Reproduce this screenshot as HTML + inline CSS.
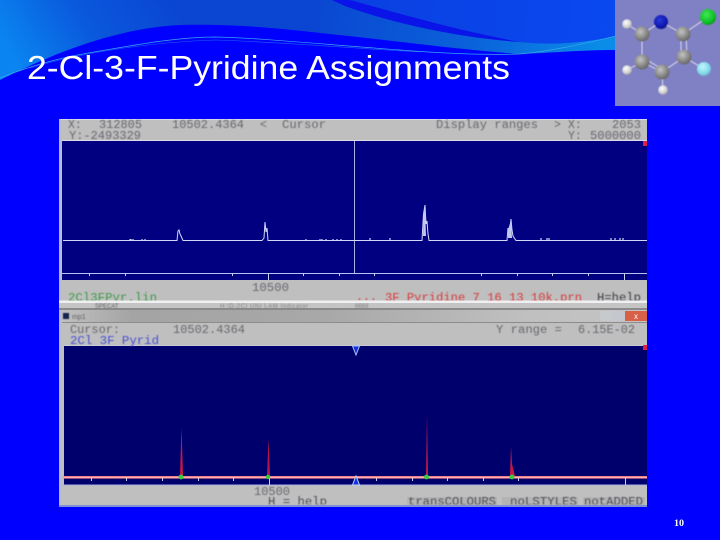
<!DOCTYPE html>
<html><head><meta charset="utf-8"><title>2-Cl-3-F-Pyridine Assignments</title>
<style>
html,body{margin:0;padding:0;background:#0000ff;width:720px;height:540px;overflow:hidden}
svg{display:block}
.m{font-family:"Liberation Mono",monospace;font-size:11.5px}
</style></head><body>
<svg width="720" height="540" viewBox="0 0 720 540" xmlns="http://www.w3.org/2000/svg">
<defs>
<linearGradient id="top" gradientUnits="userSpaceOnUse" x1="170" y1="0" x2="30" y2="85"><stop offset="0" stop-color="#0a46d2"/><stop offset="0.5" stop-color="#0a58dc"/><stop offset="1" stop-color="#0a84f0"/></linearGradient>
<linearGradient id="top2" gradientUnits="userSpaceOnUse" x1="340" y1="0" x2="616" y2="40"><stop offset="0" stop-color="#0a40e0"/><stop offset="1" stop-color="#0a48f0"/></linearGradient>
<linearGradient id="band" gradientUnits="userSpaceOnUse" x1="320" y1="5" x2="600" y2="50"><stop offset="0" stop-color="#0a48d2"/><stop offset="0.55" stop-color="#0a62da"/><stop offset="1" stop-color="#0a8ce8"/></linearGradient>
<linearGradient id="chrome" x1="0" y1="0" x2="1" y2="0"><stop offset="0" stop-color="#c0c0c0"/><stop offset="0.12" stop-color="#a4a4a4"/><stop offset="0.45" stop-color="#a8a8a8"/><stop offset="0.8" stop-color="#c0c0c0"/><stop offset="1" stop-color="#c4c4c4"/></linearGradient>
<radialGradient id="gC" cx=".4" cy=".35" r=".7"><stop offset="0" stop-color="#c4c4c4"/><stop offset=".6" stop-color="#888"/><stop offset="1" stop-color="#606060"/></radialGradient>
<radialGradient id="gH" cx=".4" cy=".35" r=".7"><stop offset="0" stop-color="#fff"/><stop offset=".7" stop-color="#ccc"/><stop offset="1" stop-color="#999"/></radialGradient>
<radialGradient id="gN" cx=".4" cy=".35" r=".7"><stop offset="0" stop-color="#2a38d8"/><stop offset=".7" stop-color="#1018b0"/><stop offset="1" stop-color="#0a1080"/></radialGradient>
<radialGradient id="gCl" cx=".4" cy=".35" r=".7"><stop offset="0" stop-color="#40e850"/><stop offset=".7" stop-color="#10c028"/><stop offset="1" stop-color="#0a9018"/></radialGradient>
<radialGradient id="gF" cx=".4" cy=".35" r=".7"><stop offset="0" stop-color="#c0f8ff"/><stop offset=".7" stop-color="#80d8e8"/><stop offset="1" stop-color="#68a8d0"/></radialGradient>
<clipPath id="c1"><rect x="59" y="280" width="588" height="20.5"/></clipPath>
<clipPath id="c2"><rect x="59" y="485" width="588" height="19.5"/></clipPath>
<filter id="b" x="-5%" y="-20%" width="110%" height="140%"><feGaussianBlur stdDeviation="0.42"/></filter>
<filter id="b2" x="-20%" y="-5%" width="140%" height="110%"><feGaussianBlur stdDeviation="0.3"/></filter>
<filter id="b3" x="-5%" y="-5%" width="110%" height="110%"><feGaussianBlur stdDeviation="0.5"/></filter>
</defs>

<rect width="720" height="540" fill="#0000ff"/>
<!-- header waves -->
<path d="M0 0H321V33C260 26 220 24 180 25C120 28 60 50 0 80Z" fill="url(#top)"/>
<path d="M320 0H616V36C580 44 550 46 520 43C470 34 400 15 345 0Z" fill="url(#top2)"/>
<path d="M320 0H345C400 15 470 34 520 42C555 46 590 42 616 36V50C580 50 550 53 520 54C460 50 390 40 320 33Z" fill="url(#band)"/>
<path d="M332 0H350C400 14 460 31 520 42C460 38 395 24 345 6Z" fill="#0a14e8"/>
<path d="M0 78C40 62 70 56 100 51C140 44 180 37 215 37C260 38 320 44 400 50C450 54 490 55 520 54C560 50 590 42 616 36" fill="none" stroke="#38a8ec" stroke-width="0.7"/>
<path d="M30 68C80 53 150 42 215 40C280 42 350 48 420 52" fill="none" stroke="#2060f0" stroke-width="0.6"/>

<!-- title -->
<text x="27" y="79" fill="#fff" font-family="Liberation Sans,sans-serif" font-size="33.500" textLength="483" lengthAdjust="spacingAndGlyphs">2-Cl-3-F-Pyridine Assignments</text>

<!-- molecule -->
<rect x="615" y="0" width="105" height="106" fill="#8080c4"/>
<g filter="url(#b3)">
<g stroke="#e4e4f0" stroke-width="0.9" fill="none">
<path d="M627 24L642 34M642 34L661 22M661 22L683 34M683 34L708 17M681 37L681 55M686 37L687 54M684 57L704 69M684 57L662 72M662 72L642 62M660 68L644 58M642 62L642 34M642 62L627 70M662 72L663 90"/>
</g>
<circle cx="627" cy="24" r="4.800" fill="url(#gH)"/><circle cx="627" cy="70" r="4.800" fill="url(#gH)"/><circle cx="663" cy="90" r="4.800" fill="url(#gH)"/>
<circle cx="642" cy="34" r="7.500" fill="url(#gC)"/><circle cx="683" cy="34" r="7.500" fill="url(#gC)"/><circle cx="642" cy="62" r="7.500" fill="url(#gC)"/><circle cx="684" cy="57" r="7.500" fill="url(#gC)"/><circle cx="662" cy="72" r="7.500" fill="url(#gC)"/>
<circle cx="661" cy="22" r="7" fill="url(#gN)"/><circle cx="708" cy="17" r="8" fill="url(#gCl)"/><circle cx="704" cy="69" r="7" fill="url(#gF)"/>
</g>

<!-- screenshot panel -->
<rect x="59" y="119" width="588" height="388" fill="#bfbfbf"/>
<rect x="59" y="119" width="588" height="1" fill="#d8d8e8"/>
<rect x="59" y="119" width="1.500" height="388" fill="#a8b4e0"/>
<rect x="59" y="505" width="588" height="2" fill="#8090d8"/>

<!-- upper plot -->
<rect x="62" y="140" width="585" height="1" fill="#dcdce8"/>
<rect x="62" y="141" width="585" height="139" fill="#000080"/>
<rect x="62" y="273" width="585" height="1" fill="#b8c0f0"/>
<rect x="354" y="141" width="1" height="132" fill="#a8b0e0"/>
<g fill="#c8d0f0"><rect x="89" y="273" width="1" height="3"/><rect x="125" y="273" width="1" height="3"/><rect x="232" y="273" width="1" height="3"/><rect x="268" y="273" width="1" height="7"/><rect x="303" y="273" width="1" height="3"/><rect x="339" y="273" width="1" height="3"/><rect x="374" y="273" width="1" height="3"/><rect x="481" y="273" width="1" height="3"/><rect x="517" y="273" width="1" height="3"/><rect x="552" y="273" width="1" height="3"/><rect x="588" y="273" width="1" height="3"/><rect x="624" y="273" width="1" height="7"/></g>
<g filter="url(#b2)">
<path d="M63 240.500H177L178 231L179 230L180 234L181 236L183 240.500H262L264 238L265 222L266 232L267 228L268 240.500H422L423.500 214L425 205L426 224L427 221L428 234L429 240.500H507L508 228L509.500 232L511 219L512 230L513 236L516 240.500H647" fill="none" stroke="#d4d8f8" stroke-width="1"/>
<path d="M423.500 214L425 206L426 236H423Z" fill="#c0c8f0"/><path d="M508 230L511 220L512 238H508Z" fill="#c0c8f0"/>
<path d="M130 240V239M131 240V239M133 240V239M142 240V239M145 240V239M306 240V239M320 240V239M322 240V239M326 240V239M333 240V239M337 240V239M341 240V239M370 240V238M390 240V238M541 240V238M547 240V238M549 240V238M611 240V238M615 240V238M620 240V238M623 240V238" stroke="#d0d8f8" stroke-width="1.200"/>
</g>
<rect x="643" y="141" width="4" height="5" fill="#e02040"/>

<!-- upper text -->
<g class="m" fill="#68686f" filter="url(#b)">
<text x="68" y="128">X:</text><text x="99" y="128" textLength="43" lengthAdjust="spacingAndGlyphs">312805</text>
<text x="172" y="128" textLength="72" lengthAdjust="spacingAndGlyphs">10502.4364</text><text x="260" y="128">&lt;</text><text x="282" y="128" textLength="44" lengthAdjust="spacingAndGlyphs">Cursor</text>
<text x="436" y="128" textLength="102" lengthAdjust="spacingAndGlyphs">Display ranges</text><text x="554" y="128">&gt;</text><text x="568" y="128">X:</text><text x="612" y="128" textLength="29" lengthAdjust="spacingAndGlyphs">2053</text>
<text x="69" y="139" textLength="72" lengthAdjust="spacingAndGlyphs">Y:-2493329</text><text x="568" y="139">Y:</text><text x="590" y="139" textLength="51" lengthAdjust="spacingAndGlyphs">5000000</text>
<text x="252" y="291" textLength="37" lengthAdjust="spacingAndGlyphs">10500</text>
</g>
<g class="m" clip-path="url(#c1)" filter="url(#b)">
<text x="68" y="301" textLength="89" lengthAdjust="spacingAndGlyphs" fill="#3f9a4a">2Cl3FPyr.lin</text>
<text x="356" y="300" textLength="21" lengthAdjust="spacingAndGlyphs" fill="#d83a3a">...</text>
<text x="385" y="301" textLength="197" lengthAdjust="spacingAndGlyphs" fill="#d83a3a">3F Pyridine 7 16 13 10k.prn</text>
<text x="597" y="301" textLength="44" lengthAdjust="spacingAndGlyphs" fill="#404048">H=help</text>
</g>

<!-- divider / second window chrome -->
<rect x="59" y="300.500" width="588" height="3" fill="#f0f0f2"/>
<rect x="59" y="303" width="588" height="5" fill="#c4c4c4"/>
<rect x="59" y="308" width="588" height="2" fill="#8a8a8a"/>
<rect x="62" y="310" width="585" height="12" fill="url(#chrome)"/>
<rect x="62" y="322" width="585" height="1" fill="#8c8c8c"/>
<g filter="url(#b)">
<rect x="63" y="313" width="6" height="6" fill="#182050"/>
<text x="72" y="319" font-family="Liberation Sans,sans-serif" font-size="7" fill="#606060">mp1</text>
<text x="95" y="308" font-family="Liberation Sans,sans-serif" font-size="6" fill="#606060">SPECAT</text>
<text x="220" y="308" font-family="Liberation Sans,sans-serif" font-size="6" fill="#808080" textLength="88">H:\D-2CI UNI LAM Indicator</text>
<text x="355" y="308" font-family="Liberation Sans,sans-serif" font-size="6" fill="#808080">6668</text>
</g>
<rect x="600" y="311" width="12" height="10" fill="#c8ccd0" opacity=".8"/><rect x="612" y="311" width="13" height="10" fill="#c4c8d0" opacity=".8"/><rect x="625" y="311" width="22" height="10" fill="#d86048"/>
<text x="636" y="319" font-family="Liberation Sans,sans-serif" font-size="8" fill="#fff" text-anchor="middle">x</text>

<!-- lower plot -->
<rect x="64" y="345" width="583" height="140" fill="#00006c"/>
<rect x="64" y="345" width="583" height="1" fill="#c8c8d8"/>
<rect x="63" y="476" width="584" height="2.600" fill="#f08088"/>
<rect x="63" y="477" width="584" height="1" fill="#ffb0b8"/>
<rect x="62" y="484.500" width="585" height="1" fill="#a8b0e0"/>
<g fill="#c8d0f0"><rect x="91" y="478" width="1" height="3"/><rect x="126" y="478" width="1" height="3"/><rect x="162" y="478" width="1" height="3"/><rect x="198" y="478" width="1" height="3"/><rect x="233" y="478" width="1" height="3"/><rect x="269" y="478" width="1" height="7"/><rect x="376" y="478" width="1" height="3"/><rect x="412" y="478" width="1" height="3"/><rect x="447" y="478" width="1" height="3"/><rect x="483" y="478" width="1" height="3"/><rect x="518" y="478" width="1" height="3"/><rect x="625" y="478" width="1" height="7"/></g>
<g filter="url(#b2)">
<path d="M181.500 427L183 476H180Z" fill="#c81848"/><path d="M268.500 438L270 476H267Z" fill="#b81848"/>
<path d="M427 414L428 476H426Z" fill="#c81848"/><path d="M511 446L512 464L515 476H510Z" fill="#c81848"/>
</g>
<g fill="#30d040"><circle cx="181" cy="477" r="2.400"/><circle cx="268" cy="477" r="2.200"/><circle cx="426.500" cy="477" r="2.400"/><circle cx="512" cy="477" r="2.400"/></g>
<path d="M352.500 346H359.500L356 355Z" fill="#1030e0" stroke="#a8c0f0" stroke-width="1"/>
<path d="M352.500 485H359.500L356 476Z" fill="#1030e0" stroke="#c0d0f8" stroke-width="1"/>
<rect x="643" y="345" width="4" height="5" fill="#e02040"/>

<!-- lower text -->
<g class="m" fill="#68686f" filter="url(#b)">
<text x="70" y="333" textLength="50" lengthAdjust="spacingAndGlyphs">Cursor:</text><text x="173" y="333" textLength="72" lengthAdjust="spacingAndGlyphs">10502.4364</text>
<text x="496" y="333" textLength="66" lengthAdjust="spacingAndGlyphs">Y range =</text><text x="578" y="333" textLength="57" lengthAdjust="spacingAndGlyphs">6.15E-02</text>
<text x="70" y="344" textLength="89" lengthAdjust="spacingAndGlyphs" fill="#4a50d0">2Cl 3F Pyrid</text>
<text x="254" y="495" textLength="36" lengthAdjust="spacingAndGlyphs">10500</text>
</g>
<rect x="407" y="497" width="90" height="8" fill="#b4b4b4"/><rect x="502" y="497" width="76" height="8" fill="#b4b4b4"/><rect x="583" y="497" width="62" height="8" fill="#b4b4b4"/>
<g class="m" fill="#505058" clip-path="url(#c2)" filter="url(#b)">
<text x="268" y="505" textLength="59" lengthAdjust="spacingAndGlyphs">H = help</text>
<text x="408" y="505" textLength="88" lengthAdjust="spacingAndGlyphs">transCOLOURS</text><text x="510" y="505" textLength="67" lengthAdjust="spacingAndGlyphs">noLSTYLES</text><text x="584" y="505" textLength="59" lengthAdjust="spacingAndGlyphs">notADDED</text>
</g>

<!-- page number -->
<text x="674" y="526" font-family="Liberation Serif,serif" font-size="9.500" font-weight="bold" fill="#fff" textLength="10" lengthAdjust="spacingAndGlyphs">10</text>
</svg>
</body></html>
